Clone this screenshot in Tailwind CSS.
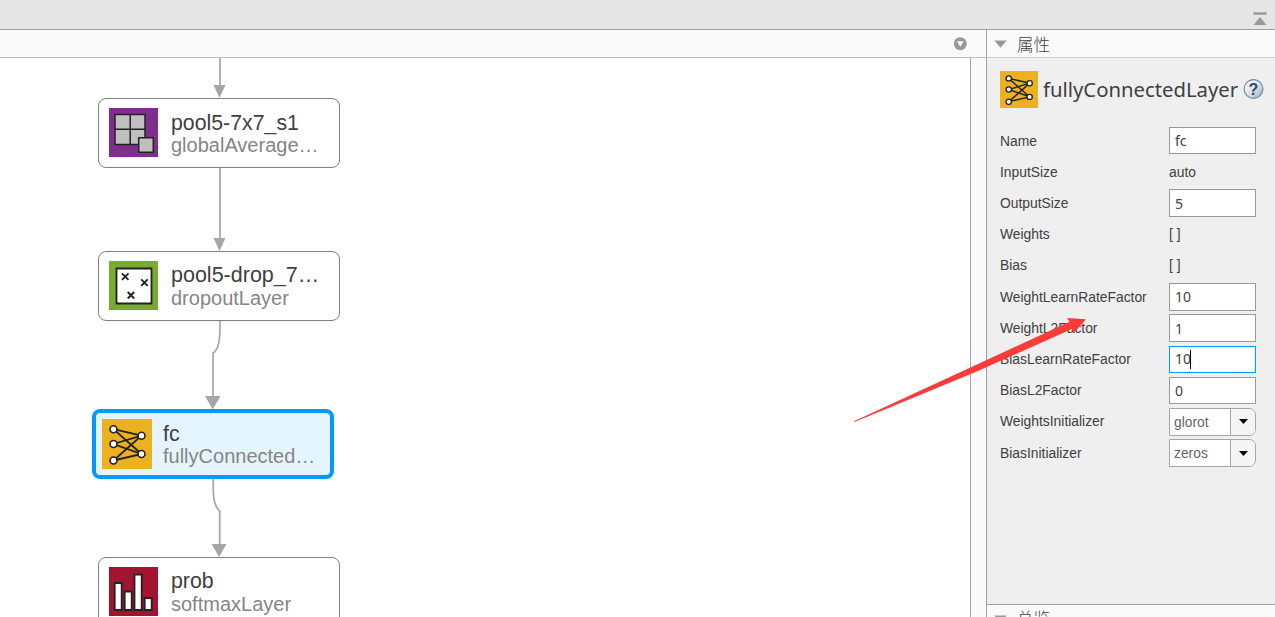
<!DOCTYPE html>
<html lang="zh-CN">
<head>
    <meta charset="UTF-8">
    <meta name="viewport" content="width=device-width, initial-scale=1.0">
    <title>Deep Network Designer</title>
    <script src="https://cdn.jsdelivr.net/npm/@tailwindcss/browser@4"></script>
</head>
<body class="relative flex h-screen flex-col overflow-hidden bg-white font-['Liberation_Sans','Noto_Sans_CJK_SC',sans-serif] text-[#404040]">

    <!-- Toolstrip -->
    <header class="flex h-[30px] shrink-0 justify-end border-b border-[#a0a0a0] bg-[#e6e6e6] pt-3 pr-2">
        <svg class="h-[14px] w-[14px]" viewBox="0 0 14 14">
            <path d="M0.500 1.500h13" stroke="#999" stroke-width="2.500"/>
            <path d="M7 5L13.500 13H0.500z" fill="#999"/>
        </svg>
    </header>

    <div class="flex min-h-0 flex-1">

        <!-- Designer -->
        <main class="flex min-w-0 flex-1 flex-col">
            <div class="flex h-7 shrink-0 items-center justify-end border-b border-[#bdbdbd] bg-[#fafafa] pr-[19px]">
                <svg class="h-[14px] w-[14px]" viewBox="0 0 14 14">
                    <circle cx="7.300" cy="6.700" r="6.500" fill="#999"/>
                    <path d="M4 4.300h6.600L7.300 9.700z" fill="#fff"/>
                </svg>
            </div>
            <div class="flex min-h-0 flex-1">
                <div class="relative flex-1 overflow-hidden bg-white">

                    <!-- Connections -->
                    <svg class="absolute top-0 left-0" width="400" height="559" viewBox="0 58 400 559" fill="none" stroke="#a6a6a6" stroke-width="1.700">
                        <path d="M220 58V88M220 168V240M220 320V327C220 342 217 351 213 353V398M213.300 478V490C213.300 502 216 508 219.700 511V545"/>
                        <g fill="#a6a6a6" stroke="none">
                            <path d="M213.500 85h12L219.500 98z"/>
                            <path d="M213.500 238h12L219.500 251z"/>
                            <path d="M205 396h15.500L212.700 409.500z"/>
                            <path d="M211.500 544h15L219 557z"/>
                        </g>
                    </svg>

                    <!-- Layers -->
                    <div class="absolute top-[40px] left-[98px] flex h-[70px] w-[242px] gap-3 rounded-[8px] border-[1.500px] border-[#808080] bg-white pt-[9px] pl-[10px]">
                        <svg class="h-[49px] w-[49px] shrink-0" viewBox="0 0 49 49">
                            <path d="M0 0h49v49H0z" fill="#7e2f8e"/>
                            <path d="M6 6.500h30v30H6zM21.200 6.500v30M6 21.200h30" fill="#bfbfbf" stroke="#222" stroke-width="1.500"/>
                            <path d="M29.700 29.700h14.600v14.600H29.700z" fill="#bfbfbf" stroke="#222" stroke-width="1.500"/>
                        </svg>
                        <div class="pt-[2px] pl-px">
                            <div class="h-[25px] text-[21.300px] leading-[26px]">pool5-7x7_s1</div>
                            <div class="text-[20px] leading-[21px] text-[#858585]">globalAverage…</div>
                        </div>
                    </div>

                    <div class="absolute top-[193px] left-[98px] flex h-[70px] w-[242px] gap-3 rounded-[8px] border-[1.500px] border-[#808080] bg-white pt-[9px] pl-[10px]">
                        <svg class="h-[49px] w-[49px] shrink-0" viewBox="0 0 49 49">
                            <path d="M0 0h49v49H0z" fill="#77ac30"/>
                            <path d="M7.500 7.500h35v35h-35z" fill="#fff" stroke="#222" stroke-width="1.800"/>
                            <path d="M13 12.300l6.500 6.500M19.500 12.300l-6.500 6.500M32.200 18.300l6.500 6.500M38.700 18.300l-6.500 6.500M18.700 31l6.500 6.500M25.200 31l-6.500 6.500" stroke="#222" stroke-width="1.900"/>
                        </svg>
                        <div class="pt-[2px] pl-px">
                            <div class="text-[21.500px] leading-[25px]">pool5-drop_7…</div>
                            <div class="text-[20px] leading-[21px] text-[#858585]">dropoutLayer</div>
                        </div>
                    </div>

                    <div class="absolute top-[351px] left-[92px] flex h-[70px] w-[241.500px] gap-[11px] rounded-[8px] border-4 border-[#0099ff] bg-[#e5f5ff] pt-[6px] pl-[6px]">
                        <svg class="h-[50px] w-[50px] shrink-0" viewBox="0 0 50 50">
                            <path d="M0 0h50v50H0z" fill="#edb120"/>
                            <path d="M11.500 10.200L39.500 16.700L11.500 25L39.500 35L11.500 41.500L39.500 16.700M11.500 10.200L39.500 35" fill="none" stroke="#222" stroke-width="1.800"/>
                            <g fill="#fff" stroke="#222" stroke-width="1.600">
                                <circle cx="11.500" cy="10.200" r="3.500"/>
                                <circle cx="11.500" cy="25" r="3.500"/>
                                <circle cx="11.500" cy="41.500" r="3.500"/>
                                <circle cx="39.500" cy="16.700" r="3.500"/>
                                <circle cx="39.500" cy="35" r="3.500"/>
                            </g>
                        </svg>
                        <div class="pt-[2px]">
                            <div class="h-[25px] text-[21.300px] leading-[26px]">fc</div>
                            <div class="text-[20px] leading-[21px] text-[#858585]">fullyConnected…</div>
                        </div>
                    </div>

                    <div class="absolute top-[499px] left-[98px] flex h-[70px] w-[242px] gap-3 rounded-[8px] border-[1.500px] border-[#808080] bg-white pt-[9px] pl-[10px]">
                        <svg class="h-[49px] w-[49px] shrink-0" viewBox="0 0 49 49">
                            <path d="M0 0h49v49H0z" fill="#a2142f"/>
                            <path d="M5.700 16h7v27h-7zM15.700 24.500h7V43h-7zM25.500 7.700h7.200V43h-7.200zM35.700 31h7v12h-7z" fill="#fff" stroke="#222" stroke-width="1.800"/>
                        </svg>
                        <div class="pt-[2px] pl-px">
                            <div class="text-[21.300px] leading-[25px]">prob</div>
                            <div class="text-[20px] leading-[21px] text-[#858585]">softmaxLayer</div>
                        </div>
                    </div>
                </div>
                <div class="w-4 border-l border-[#a6a6a6] bg-[#fafafa]"></div>
            </div>
        </main>

        <!-- Properties -->
        <aside class="flex w-[289px] shrink-0 flex-col border-l border-[#a0a0a0] bg-[#efefef]">
            <div class="flex h-7 shrink-0 items-center border-b border-[#cfcfcf] bg-[#fafafa] pl-[7px]">
                <svg class="h-2 w-[13px]" viewBox="0 0 13 8"><path d="M0.300 0.500h12.400L6.500 7.800z" fill="#999"/></svg>
                <span class="ml-[10px] font-['Noto_Sans_CJK_SC',sans-serif] text-[16.500px] leading-7 font-light">属性</span>
            </div>

            <div class="min-h-0 flex-1 pl-[13px]">
                <div class="flex items-center pt-[13px]">
                    <svg class="h-[37px] w-[38px]" viewBox="0 0 50 50" preserveAspectRatio="none">
                        <path d="M0 0h50v50H0z" fill="#edb120"/>
                        <path d="M11.500 10L39 16.500L11.500 25L39 35L11.500 41.500L39 16.500M11.500 10L39 35" fill="none" stroke="#222" stroke-width="1.900"/>
                        <g fill="#fff" stroke="#222" stroke-width="1.700">
                            <circle cx="11.500" cy="10" r="3.500"/>
                            <circle cx="11.500" cy="25" r="3.500"/>
                            <circle cx="11.500" cy="41.500" r="3.500"/>
                            <circle cx="39" cy="16.500" r="3.500"/>
                            <circle cx="39" cy="35" r="3.500"/>
                        </g>
                    </svg>
                    <h1 class="ml-[5px] w-[200px] font-['Noto_Sans',sans-serif] text-[20.300px] leading-[37px] whitespace-nowrap">fullyConnectedLayer</h1>
                    <svg class="h-[21px] w-[21px] font-['Liberation_Sans',sans-serif]" viewBox="0 0 21 21">
                        <defs>
                            <linearGradient id="help" x1="0" y1="0" x2="1" y2="1">
                                <stop offset="0" stop-color="#fff"/>
                                <stop offset="0.500" stop-color="#dce5ee"/>
                                <stop offset="1" stop-color="#8fa9c2"/>
                            </linearGradient>
                        </defs>
                        <circle cx="10.500" cy="10" r="9.400" fill="url(#help)" stroke="#7a90a6" stroke-width="1.300"/>
                        <text x="10.500" y="15.500" text-anchor="middle" font-size="16" font-weight="bold" fill="#34495e">?</text>
                    </svg>
                </div>

                <div class="mt-[17.300px] grid auto-rows-[31.230px] grid-cols-[169px_87px] items-center text-[13.850px]">
                    <span>Name</span>
                    <div class="h-[27px] border border-[#999] bg-white pl-[5px] font-['Noto_Sans',sans-serif] text-[14px] leading-[26px]">fc</div>
                    <span>InputSize</span>
                    <span>auto</span>
                    <span>OutputSize</span>
                    <div class="h-[28px] border border-[#999] bg-white pl-[5px] font-['Noto_Sans',sans-serif] text-[14px] leading-[27px]">5</div>
                    <span>Weights</span>
                    <span>[ ]</span>
                    <span>Bias</span>
                    <span>[ ]</span>
                    <span>WeightLearnRateFactor</span>
                    <div class="h-[28px] border border-[#999] bg-white pl-[5px] font-['Noto_Sans',sans-serif] text-[14px] leading-[26px]">10</div>
                    <span>WeightL2Factor</span>
                    <div class="h-[28px] border border-[#999] bg-white pl-[5px] font-['Noto_Sans',sans-serif] text-[14px] leading-[27px]">1</div>
                    <span>BiasLearnRateFactor</span>
                    <div class="flex h-[27px] items-center border border-[#0099ff] bg-white pl-[5px] font-['Noto_Sans',sans-serif] text-[14px] leading-[26px]">10<i class="-ml-px h-[19px] w-px bg-black"></i></div>
                    <span>BiasL2Factor</span>
                    <div class="h-[27px] border border-[#999] bg-white pl-[5px] font-['Noto_Sans',sans-serif] text-[14px] leading-[26px]">0</div>
                    <span>WeightsInitializer</span>
                    <div class="flex h-[28px] overflow-hidden rounded-r-[7px] border border-[#a6a6a6] bg-white text-[#666]">
                        <span class="w-[61px] border-r border-[#a6a6a6] pl-1 leading-[26px]">glorot</span>
                        <span class="flex flex-1 items-center justify-center bg-[#f5f5f5]">
                            <svg class="h-[5px] w-[9px]" viewBox="0 0 9 5"><path d="M0 0h9L4.500 5z" fill="#000"/></svg>
                        </span>
                    </div>
                    <span>BiasInitializer</span>
                    <div class="flex h-[28px] overflow-hidden rounded-r-[7px] border border-[#a6a6a6] bg-white text-[#666]">
                        <span class="w-[61px] border-r border-[#a6a6a6] pl-1 leading-[27px]">zeros</span>
                        <span class="flex flex-1 items-center justify-center bg-[#f5f5f5]">
                            <svg class="h-[5px] w-[9px]" viewBox="0 0 9 5"><path d="M0 0h9L4.500 5z" fill="#000"/></svg>
                        </span>
                    </div>
                </div>
            </div>

            <!-- Overview -->
            <div class="flex h-[13px] shrink-0 items-start overflow-hidden border-t border-[#a0a0a0] bg-[#fafafa] pl-[7px]">
                <svg class="mt-[10px] h-2 w-[13px] shrink-0" viewBox="0 0 13 8"><path d="M0.300 0.500h12.400L6.500 7.800z" fill="#999"/></svg>
                <span class="ml-[10px] font-['Noto_Sans_CJK_SC',sans-serif] text-[16.500px] leading-[27px] font-light">总览</span>
            </div>
        </aside>
    </div>

    <!-- Annotation arrow -->
    <svg class="pointer-events-none absolute top-[310px] left-[850px]" width="240" height="115" viewBox="850 310 240 115">
        <path d="M854 421.300L1069.500 321.800L1067 318L1086 319.300L1074 333L1072.500 328.700L978 371L854.500 422z" fill="#fb3b3a"/>
    </svg>
</body>
</html>
